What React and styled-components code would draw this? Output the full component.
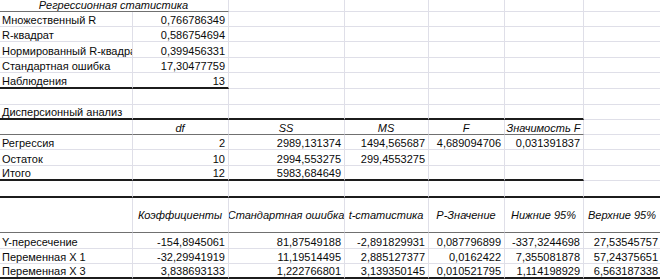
import React from 'react'
import styled, { createGlobalStyle } from 'styled-components'

const GlobalStyle = createGlobalStyle`
  html, body {
    margin: 0;
    padding: 0;
    background: #ffffff;
    overflow: hidden;
  }
  body {
    font-family: 'Liberation Sans', Arial, sans-serif;
    font-size: 11px;
    color: #0a0a0a;
  }
`

const columns = '133px 96px 116px 84px 76px 79px 78px'
const grid = '#dfdfe8'
const borders = {
  grid: `1px solid ${grid}`,
  thin: '1px solid #707070',
  thick: '2px solid #1c1c1c'
}

const Sheet = styled.div`
  width: 662px;
  margin-top: -5px;
`

const Row = styled.div`
  display: grid;
  grid-template-columns: ${columns};
  height: ${props => props.h}px;
`

const Cell = styled.div`
  box-sizing: border-box;
  grid-column: ${props => (props.span ? `span ${props.span}` : 'auto')};
  display: flex;
  align-items: ${props => (props.middle ? 'center' : 'flex-end')};
  justify-content: ${props =>
    props.align === 'right' ? 'flex-end' : props.align === 'center' ? 'center' : 'flex-start'};
  padding: 0 3px 0 2px;
  border-right: ${borders.grid};
  border-bottom: ${props => borders[props.bottom || 'grid']};
  font-style: ${props => (props.italic ? 'italic' : 'normal')};
  line-height: 12px;
  white-space: nowrap;
  overflow: hidden;
`

// one sheet row: cells = [text, ...], bottom = border kind per column
const SheetRow = ({ h, cells = [], bottom = {}, italic, center, middle }) => {
  const out = []
  let col = 0
  cells.forEach((c, i) => {
    const span = typeof c === 'object' && c !== null ? c.span : 1
    const text = typeof c === 'object' && c !== null ? c.text : c
    const isNum = typeof text === 'string' && /^-?[\d,]+$/.test(text)
    out.push(
      <Cell
        key={i}
        span={span > 1 ? span : null}
        bottom={bottom[col] || bottom.all}
        italic={italic}
        middle={middle}
        align={center || (typeof c === 'object' && c && c.center) ? 'center' : isNum ? 'right' : 'left'}
      >
        {text}
      </Cell>
    )
    col += span
  })
  while (col < 7) {
    out.push(<Cell key={`e${col}`} bottom={bottom[col] || bottom.all} />)
    col++
  }
  return <Row h={h}>{out}</Row>
}

const span = (from, to, kind) => {
  const b = {}
  for (let i = from; i <= to; i++) b[i] = kind
  return b
}

const stats = [
  ['Множественный R', '0,766786349'],
  ['R-квадрат', '0,586754694'],
  ['Нормированный R-квадрат', '0,399456331'],
  ['Стандартная ошибка', '17,30477759'],
  ['Наблюдения', '13']
]

const anova = [
  ['Регрессия', '2', '2989,131374', '1494,565687', '4,689094706', '0,031391837'],
  ['Остаток', '10', '2994,553275', '299,4553275'],
  ['Итого', '12', '5983,684649']
]

const coefs = [
  ['Y-пересечение', '-154,8945061', '81,87549188', '-2,891829931', '0,087796899', '-337,3244698', '27,53545757'],
  ['Переменная X 1', '-32,29941919', '11,19514495', '2,885127377', '0,0162422', '7,355081878', '57,24375651'],
  ['Переменная X 3', '3,838693133', '1,222766801', '3,139350145', '0,010521795', '1,114198929', '6,563187338']
]

const statHeights = [15, 15, 16, 15, 16]
const anovaHeights = [15, 16, 15]
const coefHeights = [16, 15, 15]

export default function App() {
  return (
    <>
      <GlobalStyle />
      <Sheet>
        <SheetRow
          h={17}
          italic
          cells={[{ text: 'Регрессионная статистика', span: 2, center: true }]}
          bottom={span(0, 1, 'thin')}
        />
        {stats.map((r, i) => (
          <SheetRow
            key={r[0]}
            h={statHeights[i]}
            cells={r}
            bottom={i === stats.length - 1 ? span(0, 1, 'thick') : {}}
          />
        ))}
        <SheetRow h={16} />
        <SheetRow h={15} cells={['Дисперсионный анализ']} bottom={span(0, 5, 'thick')} />
        <SheetRow
          h={15}
          italic
          center
          cells={['', 'df', 'SS', 'MS', 'F', 'Значимость F']}
          bottom={span(0, 5, 'thin')}
        />
        {anova.map((r, i) => (
          <SheetRow
            key={r[0]}
            h={anovaHeights[i]}
            cells={r}
            bottom={i === anova.length - 1 ? span(0, 5, 'thick') : {}}
          />
        ))}
        <SheetRow h={17} bottom={{ all: 'thick' }} />
        <SheetRow
          h={35}
          italic
          center
          middle
          cells={['', 'Коэффициенты', 'Стандартная ошибка', 't-статистика', 'P-Значение', 'Нижние 95%', 'Верхние 95%']}
          bottom={{ all: 'thin' }}
        />
        {coefs.map((r, i) => (
          <SheetRow
            key={r[0]}
            h={coefHeights[i]}
            cells={r}
            bottom={i === coefs.length - 1 ? { all: 'thick' } : {}}
          />
        ))}
        <SheetRow h={16} />
      </Sheet>
    </>
  )
}
